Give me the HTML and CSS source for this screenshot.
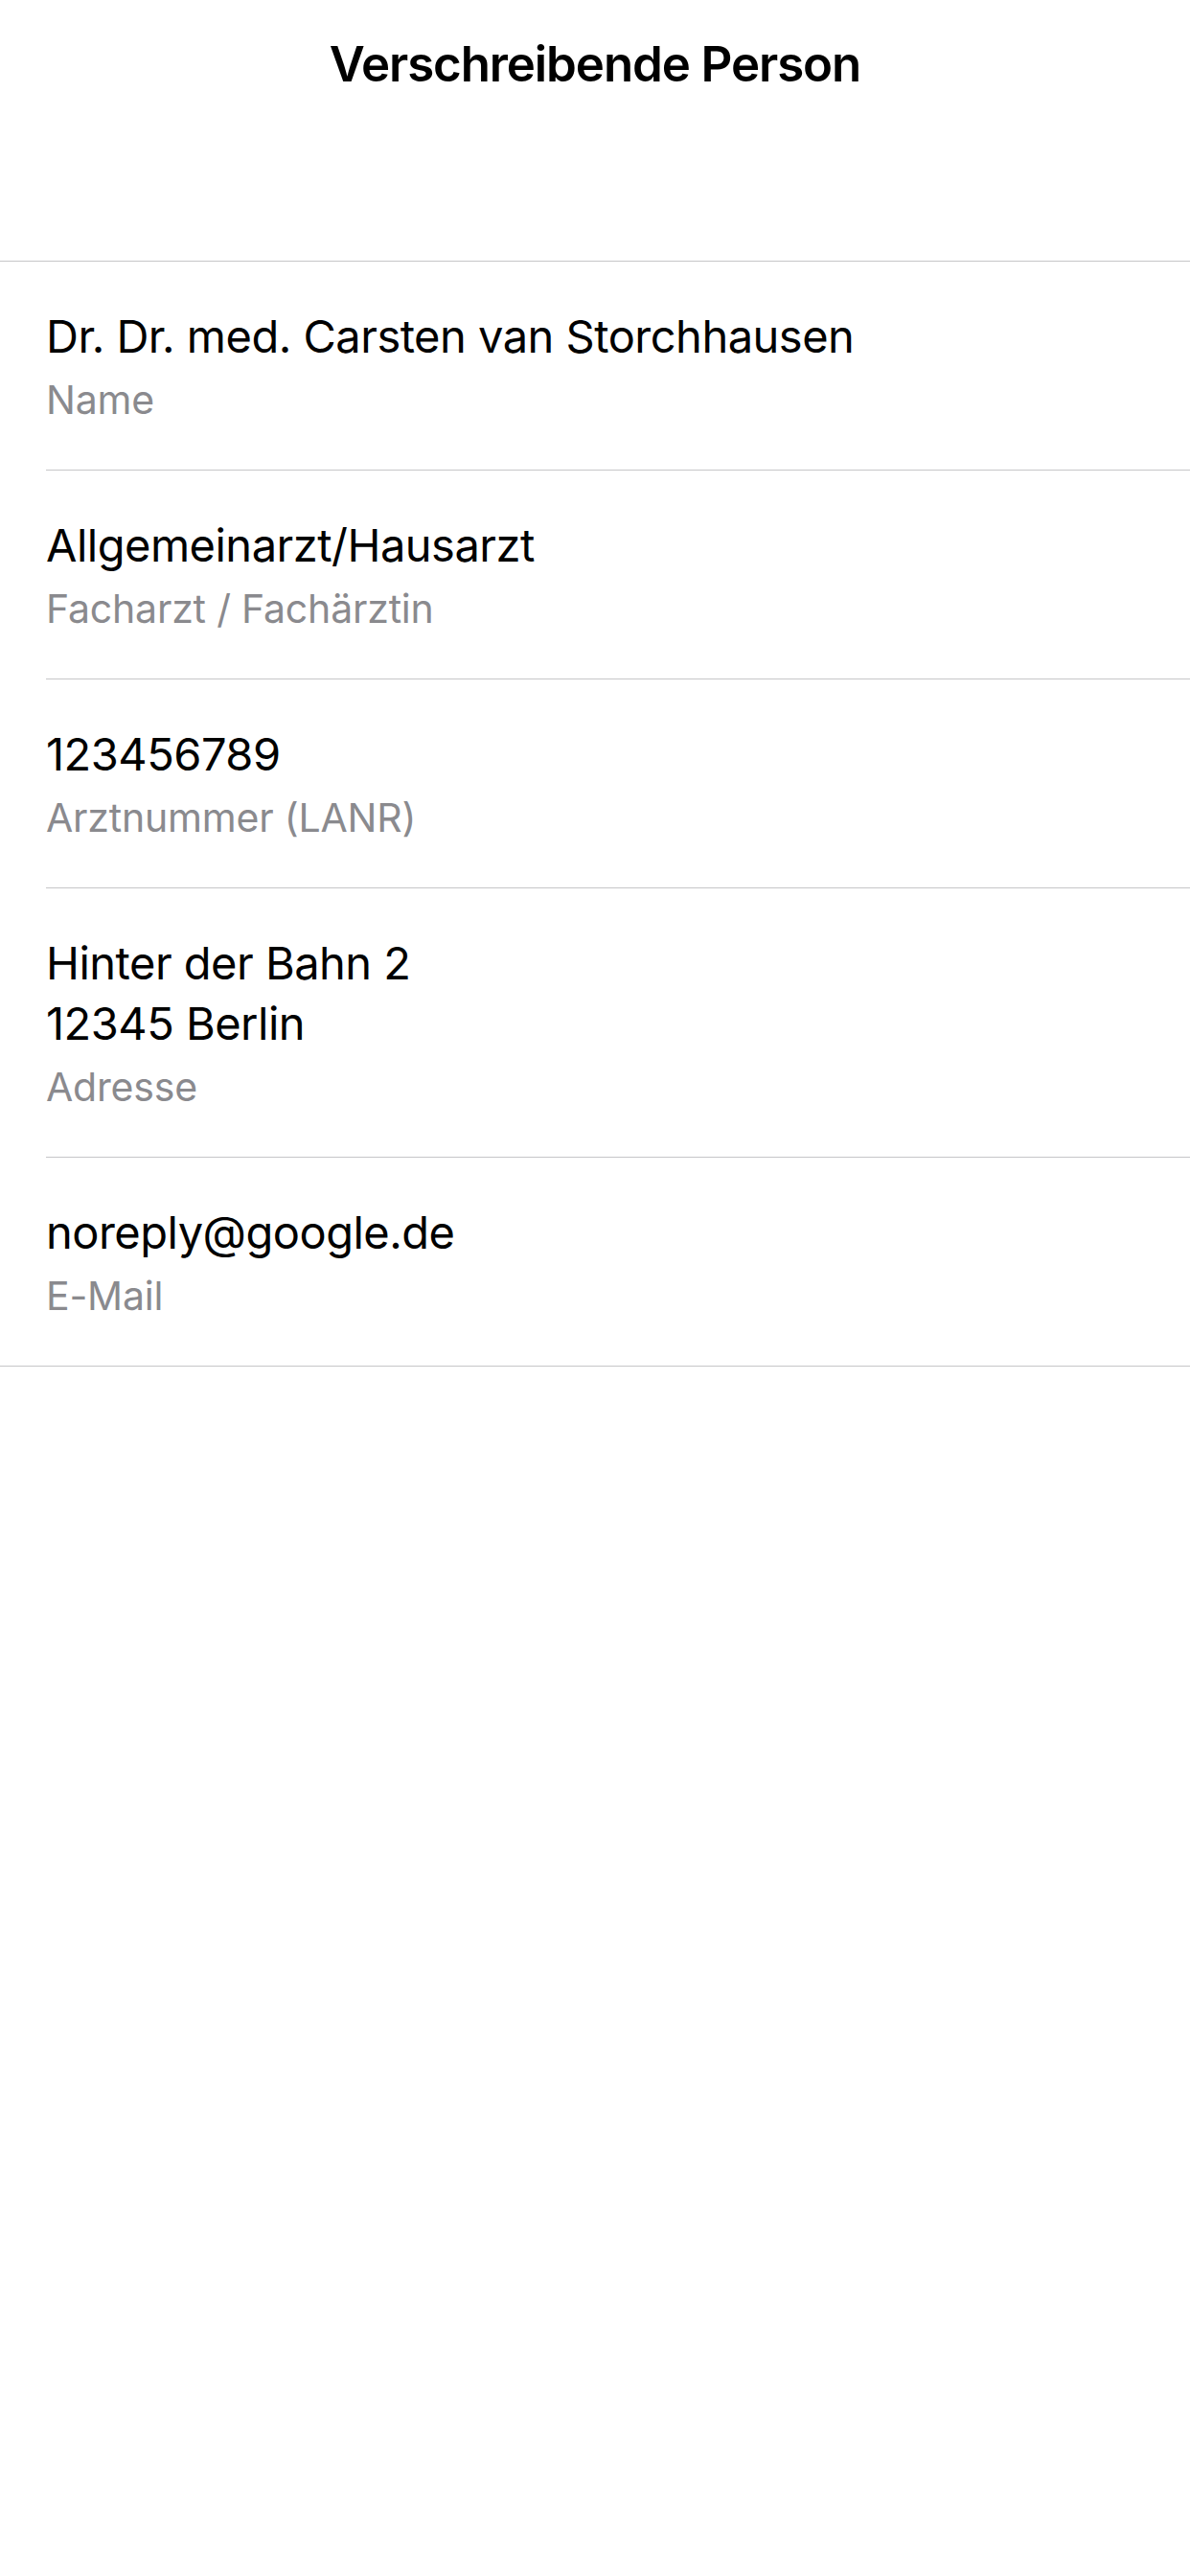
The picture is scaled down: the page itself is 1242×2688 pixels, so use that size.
FILE: index.html
```html
<!DOCTYPE html>
<html lang="de">
<head>
<meta charset="utf-8">
<title>Verschreibende Person</title>
<link rel="stylesheet" href="styles.css">
</head>
<body>
<header class="navbar">
  <h1 class="nav-title">Verschreibende Person</h1>
</header>
<main class="content">
  <ul class="list">
    <li class="row">
      <div class="value">Dr. Dr. med. Carsten van Storchhausen</div>
      <div class="label">Name</div>
    </li>
    <li class="row">
      <div class="value">Allgemeinarzt/Hausarzt</div>
      <div class="label">Facharzt / Fachärztin</div>
    </li>
    <li class="row">
      <div class="value">123456789</div>
      <div class="label">Arztnummer (LANR)</div>
    </li>
    <li class="row">
      <div class="value">Hinter der Bahn 2<br>12345 Berlin</div>
      <div class="label">Adresse</div>
    </li>
    <li class="row">
      <div class="value">noreply@google.de</div>
      <div class="label">E-Mail</div>
    </li>
  </ul>
</main>
</body>
</html>
```

FILE: styles.css
```css
html, body {
  margin: 0;
  padding: 0;
  background: #ffffff;
}

body {
  font-family: Inter, "Liberation Sans", sans-serif;
  color: #000000;
  width: 1242px;
  min-height: 2688px;
}

.navbar {
  height: 132px;
  display: flex;
  align-items: center;
  justify-content: center;
}

.nav-title {
  margin: 0;
  font-size: 51px;
  font-weight: 600;
  letter-spacing: -1.1px;
  line-height: 63px;
}

.content {
  padding-top: 140px;
}

.list {
  list-style: none;
  margin: 0;
  padding: 0;
  border-top: 1px solid #c6c6c8;
  border-bottom: 1px solid #c6c6c8;
}

.row {
  margin-left: 48px;
  padding: 46px 0 41px 0;
  border-bottom: 1px solid #c6c6c8;
}

.row:last-child {
  border-bottom: none;
}

.value {
  font-size: 47px;
  line-height: 63px;
  letter-spacing: -0.5px;
  color: #000000;
}

.label {
  margin-top: 4px;
  font-size: 41px;
  line-height: 63px;
  letter-spacing: -0.2px;
  color: #8a8a8e;
}
```
